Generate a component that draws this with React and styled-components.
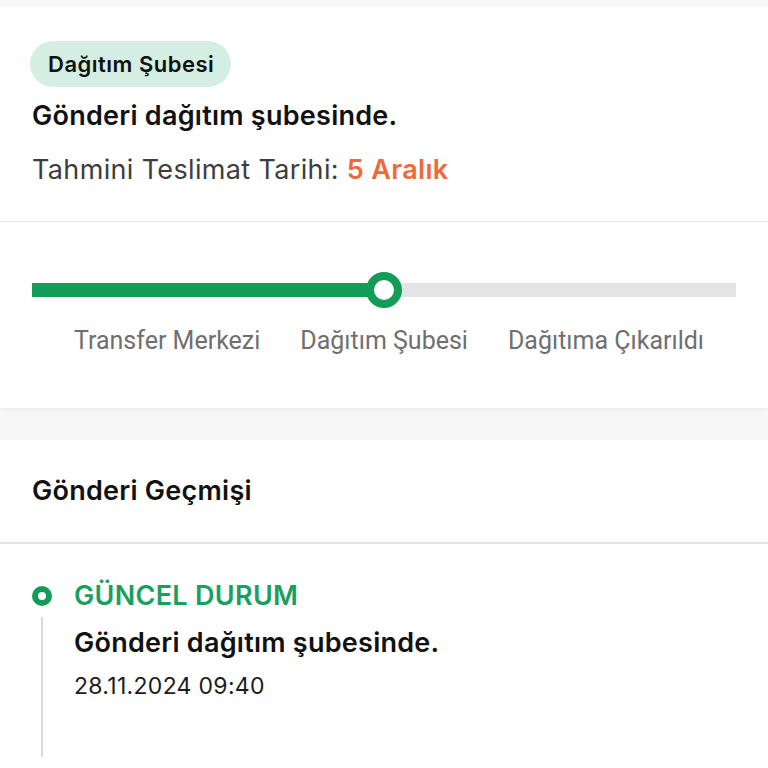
import React from 'react';
import styled, { createGlobalStyle } from 'styled-components';

const colors = {
  green: '#139c58',
  greenText: '#1a9f5f',
  orange: '#f0693a',
  badge: '#d5eee3',
  dark: '#111111',
  muted: '#3d3d3d',
  label: '#6f6f6f',
  line: '#e4e4e4',
  page: '#f7f7f7',
};

const GlobalStyle = createGlobalStyle`
  body {
    margin: 0;
    background: ${colors.page};
    font-family: 'Inter', 'Noto Sans', sans-serif;
  }
`;

const Page = styled.div`
  display: flex;
  flex-direction: column;
  padding-top: 7px;
  min-height: 100vh;
  box-sizing: border-box;
`;

const Card = styled.section`
  background: #ffffff;
  padding: ${({ pad }) => pad};
  border-bottom: ${({ divider }) => (divider ? `1px solid ${colors.line}` : 'none')};
  box-shadow: ${({ shadow }) => (shadow ? '0 2px 4px rgba(0, 0, 0, 0.05)' : 'none')};
  margin-bottom: ${({ gap }) => gap || 0}px;
  flex: ${({ grow }) => (grow ? 1 : 'none')};
`;

const Badge = styled.span`
  display: inline-flex;
  align-items: center;
  height: 46px;
  margin-left: -2px;
  padding: 0 17px 0 18px;
  border-radius: 23px;
  background: ${colors.badge};
  color: ${colors.dark};
  font-size: 22px;
  letter-spacing: 0.5px;
  font-weight: 600;
`;

const Title = styled.div`
  margin-top: ${({ top }) => top || 0}px;
  font-size: 27px;
  line-height: 32px;
  letter-spacing: 0.25px;
  font-weight: 600;
  color: ${colors.dark};
`;

const Estimate = styled.div`
  margin-top: 22px;
  font-size: 27px;
  line-height: 32px;
  letter-spacing: 0.35px;
  color: ${colors.muted};

  strong {
    color: ${colors.orange};
    font-weight: 600;
  }
`;

const TrackWrap = styled.div`
  position: relative;
  height: 36px;
  display: flex;
  align-items: center;
`;

const Track = styled.div`
  width: 100%;
  height: 14px;
  background: #e3e4e5;
  display: flex;
`;

const Fill = styled.div`
  height: 100%;
  background: ${colors.green};
`;

const Knob = styled.div`
  position: absolute;
  top: 0;
  width: 36px;
  height: 36px;
  margin-left: -18px;
  box-sizing: border-box;
  border-radius: 50%;
  border: 8px solid ${colors.green};
  background: #ffffff;
`;

const Steps = styled.div`
  display: flex;
  justify-content: center;
  gap: 40px;
  margin-top: 19px;
  padding-left: 10px;
`;

const Step = styled.span`
  font-family: 'Roboto', 'Liberation Sans', sans-serif;
  font-size: 25px;
  line-height: 28px;
  color: ${colors.label};
`;

const HistoryHead = styled.div`
  padding: 35px 32px;
  border-bottom: 2px solid ${colors.line};
`;

const Event = styled.div`
  display: grid;
  grid-template-columns: 20px 1fr;
  column-gap: 22px;
  padding: 36px 32px 0;
`;

const Marker = styled.div`
  display: flex;
  flex-direction: column;
  align-items: center;
  padding-top: 6px;
`;

const Ring = styled.div`
  width: 20px;
  height: 20px;
  box-sizing: border-box;
  border-radius: 50%;
  border: 6px solid ${colors.green};
`;

const Rail = styled.div`
  width: 2px;
  flex: 1;
  margin-top: 11px;
  background: #d9d9d9;
`;

const EventBody = styled.div`
  padding-bottom: 57px;
`;

const Status = styled.div`
  font-size: 27px;
  line-height: 32px;
  letter-spacing: 0.3px;
  font-weight: 600;
  color: ${colors.greenText};
`;

const Stamp = styled.div`
  margin-top: 13px;
  font-size: 23px;
  line-height: 28px;
  letter-spacing: 0.3px;
  color: #1c1c1c;
`;

const steps = ['Transfer Merkezi', 'Dağıtım Şubesi', 'Dağıtıma Çıkarıldı'];
const progress = 50;

export default function App() {
  return (
    <Page>
      <GlobalStyle />
      <Card pad="34px 32px 35px" divider>
        <Badge>Dağıtım Şubesi</Badge>
        <Title top={13}>Gönderi dağıtım şubesinde.</Title>
        <Estimate>
          Tahmini Teslimat Tarihi: <strong>5 Aralık</strong>
        </Estimate>
      </Card>

      <Card pad="50px 32px 53px" shadow gap={32}>
        <TrackWrap>
          <Track>
            <Fill style={{ width: `${progress}%` }} />
          </Track>
          <Knob style={{ left: `${progress}%` }} />
        </TrackWrap>
        <Steps>
          {steps.map((s) => (
            <Step key={s}>{s}</Step>
          ))}
        </Steps>
      </Card>

      <Card pad="0" grow>
        <HistoryHead>
          <Title>Gönderi Geçmişi</Title>
        </HistoryHead>
        <Event>
          <Marker>
            <Ring />
            <Rail />
          </Marker>
          <EventBody>
            <Status>GÜNCEL DURUM</Status>
            <Title top={15}>Gönderi dağıtım şubesinde.</Title>
            <Stamp>28.11.2024 09:40</Stamp>
          </EventBody>
        </Event>
      </Card>
    </Page>
  );
}
